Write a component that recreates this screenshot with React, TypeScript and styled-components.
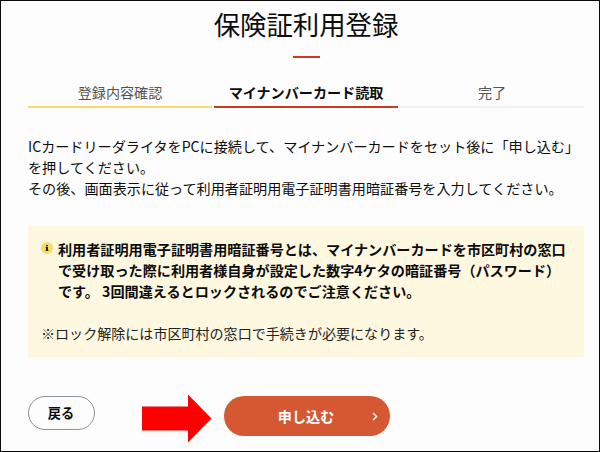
import React from "react";
import styled, { createGlobalStyle } from "styled-components";

const GlobalStyle = createGlobalStyle`
  * { box-sizing: border-box; }
  body {
    margin: 0;
    font-family: "Noto Sans CJK JP", sans-serif;
    color: #0c0c0c;
  }
`;

const Page = styled.main`
  width: 600px;
  height: 452px;
  border: 1px solid #0a0a0a;
  background: #fdfdfd;
  padding: 0 15px 0 27px;
  display: flex;
  flex-direction: column;
  overflow: hidden;
`;

const Title = styled.h1`
  margin: 5px 0 0;
  height: 36px;
  line-height: 36px;
  font-size: 26.4px;
  font-weight: 400;
  text-align: center;
  white-space: nowrap;
`;

const TitleRule = styled.div`
  width: 27px;
  height: 2px;
  margin: 14px auto 0;
  background: #cf3a1f;
`;

const Steps = styled.ol`
  list-style: none;
  margin: 24px 0 0;
  padding: 0;
  display: grid;
  grid-template-columns: 184px 184px 184px;
  column-gap: 2px;
`;

const Step = styled.li<{ $line: string; $active?: boolean }>`
  height: 26px;
  line-height: 21px;
  font-size: 14.1px;
  text-align: center;
  white-space: nowrap;
  color: ${(p) => (p.$active ? "#0c0c0c" : "#555")};
  font-weight: ${(p) => (p.$active ? 700 : 400)};
  border-bottom: 2px solid ${(p) => p.$line};
`;

const Lead = styled.p`
  margin: 28px 0 0;
  font-size: 14.11px;
  line-height: 21px;
  white-space: nowrap;
`;

const Notice = styled.section`
  margin-top: 27px;
  width: 556px;
  height: 131px;
  padding: 13px 13px 0;
  background: #fef8e1;
  font-size: 14.11px;
  line-height: 21px;
  white-space: nowrap;
`;

const NoticeMain = styled.div`
  display: flex;
  gap: 5px;
  font-weight: 700;
`;

const InfoIcon = styled.svg`
  flex: none;
  width: 12px;
  height: 12px;
  margin-top: 3px;
`;

const NoticeText = styled.p`
  margin: 0;
`;

const NoticeSub = styled.p`
  margin: 21px 0 0;
  font-size: 14.06px;
  color: #222;
`;

const Actions = styled.div`
  display: flex;
  align-items: flex-start;
  margin-top: 36px;
`;

const BackButton = styled.button`
  width: 67px;
  height: 34px;
  margin-top: 3px;
  padding: 0 1px 0 0;
  border: 1px solid #8a929a;
  border-radius: 17px;
  background: #fdfdfd;
  color: #0c0c0c;
  font: 700 13.2px/32px "Noto Sans CJK JP", sans-serif;
`;

const Arrow = styled.svg`
  width: 70px;
  height: 49px;
  margin: 1px 12px 0 46.5px;
`;

const SubmitButton = styled.button`
  display: grid;
  grid-template-columns: 1fr 6px;
  align-items: center;
  width: 166px;
  height: 40px;
  margin-top: 3px;
  padding: 0 12px 0 0;
  border: 0;
  border-radius: 20px;
  background: #d55832;
  color: #fff;
  font: 700 14.1px/40px "Noto Sans CJK JP", sans-serif;
`;

const SubmitLabel = styled.span`
  padding-left: 17px;
  text-align: center;
`;

const Chevron = styled.svg`
  width: 6px;
  height: 9px;
`;

export default function App() {
  return (
    <>
      <GlobalStyle />
      <Page>
        <Title>保険証利用登録</Title>
        <TitleRule />
        <Steps>
          <Step $line="#f8da6c">登録内容確認</Step>
          <Step $line="#cf3a1f" $active>マイナンバーカード読取</Step>
          <Step $line="#f1f1f1">完了</Step>
        </Steps>
        <Lead>
          ICカードリーダライタをPCに接続して、マイナンバーカードをセット後に「申し込む」
          <br />
          を押してください。
          <br />
          その後、画面表示に従って利用者証明用電子証明書用暗証番号を入力してください。
        </Lead>
        <Notice>
          <NoticeMain>
            <InfoIcon viewBox="0 0 12 12">
              <circle cx="6" cy="6" r="6" fill="#f5dc6a" />
              <path d="M5 3h2v1.3H5zM4.5 5H7v3.2h.6V9H4.4v-.8H5V5.8h-.5z" fill="#2b2618" />
            </InfoIcon>
            <NoticeText>
              利用者証明用電子証明書用暗証番号とは、マイナンバーカードを市区町村の窓口
              <br />
              で受け取った際に利用者様自身が設定した数字4ケタの暗証番号（パスワード）
              <br />
              です。 3回間違えるとロックされるのでご注意ください。
            </NoticeText>
          </NoticeMain>
          <NoticeSub>※ロック解除には市区町村の窓口で手続きが必要になります。</NoticeSub>
        </Notice>
        <Actions>
          <BackButton>戻る</BackButton>
          <Arrow viewBox="0 0 70 49">
            <path d="M0 12.5H46V0.5L69.5 24.5L46 48.5V36.5H0Z" fill="#fe0000" />
          </Arrow>
          <SubmitButton>
            <SubmitLabel>申し込む</SubmitLabel>
            <Chevron viewBox="0 0 6 9">
              <path d="M1 1L4.6 4.5L1 8" fill="none" stroke="#fff" strokeWidth="1.4" />
            </Chevron>
          </SubmitButton>
        </Actions>
      </Page>
    </>
  );
}
